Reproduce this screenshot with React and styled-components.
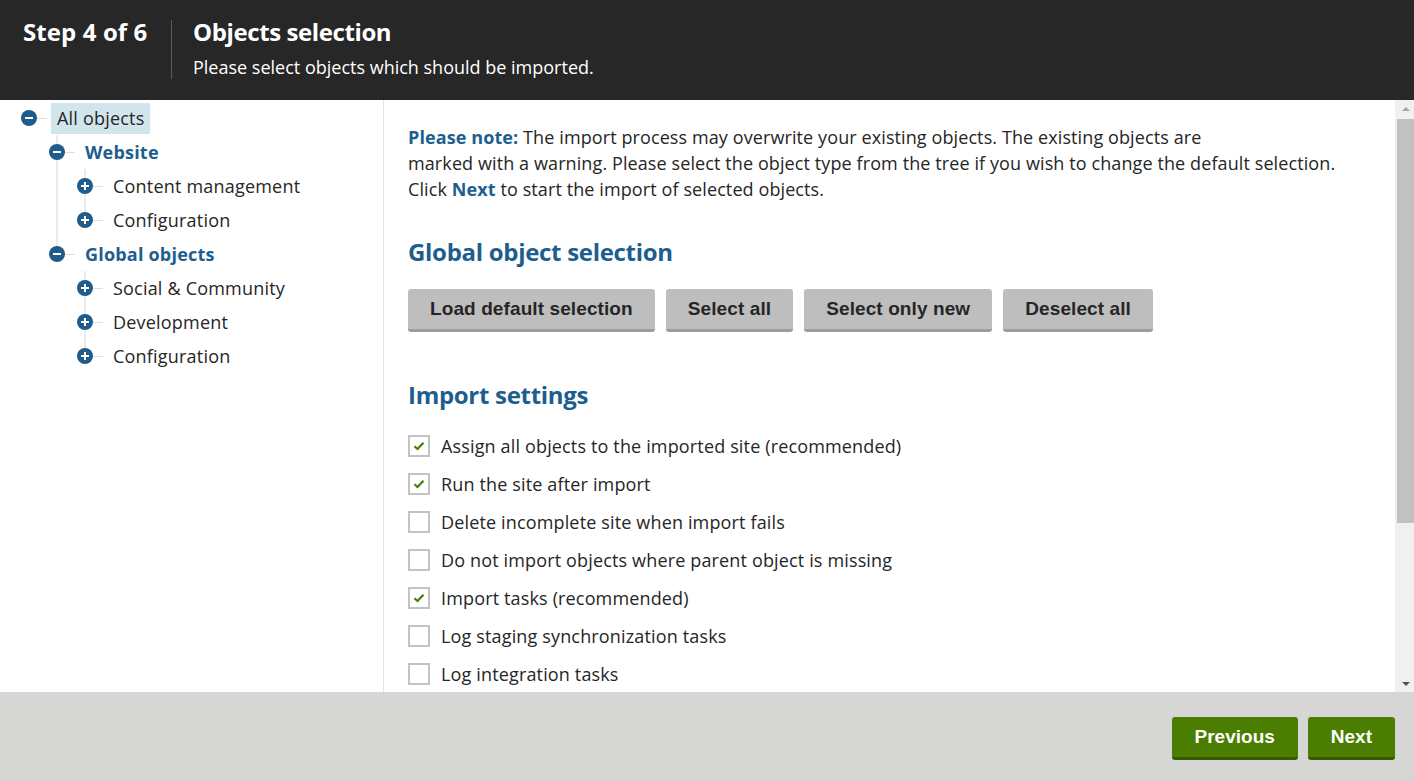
import React from "react";
import styled, { createGlobalStyle } from "styled-components";

const GlobalStyle = createGlobalStyle`
  html, body { margin: 0; padding: 0; height: 100%; }
  body { font-family: "Open Sans", "Noto Sans", sans-serif; color: #262626; background: #fff; }
  #root { height: 100%; }
  * { box-sizing: border-box; }
`;

const Page = styled.div`
  display: flex;
  flex-direction: column;
  width: 1414px;
  height: 781px;
  overflow: hidden;
`;

const Header = styled.header`
  flex: 0 0 100px;
  background: #272727;
  color: #fff;
  display: flex;
  align-items: flex-start;
  padding: 16px 0 0 23px;
`;

const StepLabel = styled.div`
  font-size: 24px;
  font-weight: 700;
  line-height: 32px;
  width: 148px;
  letter-spacing: 0.1px;
`;

const TitleBlock = styled.div`
  border-left: 1px solid #5a5a5a;
  padding: 0 0 0 21px;
  margin-top: 4px;
`;

const Title = styled.h1`
  margin: -4px 0 0;
  font-size: 24px;
  font-weight: 700;
  line-height: 32px;
  letter-spacing: -0.4px;
`;

const Subtitle = styled.div`
  font-size: 18px;
  line-height: 24px;
  margin-top: 7px;
`;

const Body = styled.div`
  flex: 1 1 auto;
  display: flex;
  min-height: 0;
`;

const TreePane = styled.nav`
  flex: 0 0 384px;
  border-right: 1px solid #e4e4e4;
  padding: 1px 0 0 21px;
  font-size: 18px;
`;

const Node = styled.div`
  position: relative;
`;

const Row = styled.div`
  position: relative;
  z-index: 1;
  display: flex;
  align-items: center;
  height: 34px;
`;

const Toggle = styled.span`
  position: relative;
  flex: 0 0 auto;
  width: 16px;
  height: 16px;
  border-radius: 50%;
  background: #1f5b8b;
  display: inline-flex;
  align-items: center;
  justify-content: center;
  &::before {
    content: "";
    width: 8px;
    height: 2px;
    background: #fff;
    position: absolute;
  }
  &::after {
    content: "";
    display: ${(p) => (p.$open ? "none" : "block")};
    width: 2px;
    height: 8px;
    background: #fff;
    position: absolute;
  }
`;

const Connector = styled.span`
  flex: 0 0 auto;
  width: 10px;
  height: 1px;
  background: #dedede;
  margin-right: 4px;
`;

const Label = styled.span`
  display: inline-flex;
  align-items: center;
  height: 31px;
  padding: 0 6px;
  white-space: nowrap;
  letter-spacing: 0.2px;
  background: ${(p) => (p.$selected ? "#d0e5ec" : "transparent")};
  color: ${(p) => (p.$bold ? "#1d5e8e" : "#262626")};
  font-weight: ${(p) => (p.$bold ? 700 : 400)};
`;

const Children = styled.div`
  padding-left: 28px;
  & > ${Node}::before {
    content: "";
    position: absolute;
    left: 7px;
    top: 0;
    height: 100%;
    width: 2px;
    background: #ebebeb;
  }
  & > ${Node}:last-child::before {
    height: 10px;
  }
`;

const Content = styled.main`
  flex: 1 1 auto;
  overflow: hidden;
  padding: 24px 24px 0;
`;

const Scrollbar = styled.div`
  flex: 0 0 19px;
  background: #f0f0f0;
  display: flex;
  flex-direction: column;
  align-items: flex-end;
`;

const Arrow = styled.div`
  flex: 0 0 17px;
  width: 17px;
  display: flex;
  align-items: center;
  justify-content: center;
  &::before {
    content: "";
    border-left: 4px solid transparent;
    border-right: 4px solid transparent;
    ${(p) =>
      p.$down
        ? "border-top: 4px solid #505050;"
        : "border-bottom: 4px solid #a3a3a3;"}
  }
`;

const Thumb = styled.div`
  width: 17px;
  height: 404px;
  margin-top: 2px;
  background: #c1c1c1;
`;

const Track = styled.div`
  flex: 1 1 auto;
`;

const Note = styled.p`
  margin: 0;
  font-size: 18px;
  line-height: 26px;
  letter-spacing: 0.1px;
  color: #262626;
`;

const Strong = styled.strong`
  color: #1d5e8e;
  font-weight: 700;
`;

const Heading = styled.h2`
  margin: ${(p) => p.$top}px 0 0;
  font-size: 24px;
  line-height: 30px;
  font-weight: 700;
  color: #1d5e8e;
  letter-spacing: -0.3px;
`;

const ButtonRow = styled.div`
  display: flex;
  gap: 11px;
  margin-top: 22px;
`;

const GrayButton = styled.button`
  font-family: "Liberation Sans", Arial, sans-serif;
  font-weight: 700;
  font-size: 19px;
  letter-spacing: 0.1px;
  color: #262626;
  background: #bebebe;
  border: none;
  border-bottom: 3px solid #9d9d9d;
  border-radius: 3px;
  height: 43px;
  padding: 0 22px;
  cursor: pointer;
`;

const CheckList = styled.div`
  display: flex;
  flex-direction: column;
  margin-top: 17px;
`;

const CheckRow = styled.label`
  display: flex;
  align-items: center;
  height: 38px;
  font-size: 18px;
  letter-spacing: 0.15px;
  color: #262626;
`;

const Box = styled.span`
  flex: 0 0 auto;
  width: 22px;
  height: 22px;
  border: 2px solid #c2c2c2;
  background: #fff;
  margin-right: 11px;
  display: inline-flex;
  align-items: center;
  justify-content: center;
`;

const Footer = styled.footer`
  flex: 0 0 89px;
  background: #d6d7d5;
  display: flex;
  justify-content: flex-end;
  align-items: flex-start;
  gap: 10px;
  padding: 25px 19px 0 0;
`;

const GreenButton = styled.button`
  font-family: "Liberation Sans", Arial, sans-serif;
  font-weight: 700;
  font-size: 19px;
  color: #fff;
  background: #4a7d00;
  border: none;
  border-bottom: 3px solid #355a00;
  border-radius: 3px;
  height: 43px;
  padding: 0 23px;
  cursor: pointer;
`;

function TreeItem({ label, open, bold, selected, children }) {
  return (
    <Node>
      <Row>
        <Toggle $open={open} />
        <Connector />
        <Label $bold={bold} $selected={selected}>{label}</Label>
      </Row>
      {children && <Children>{children}</Children>}
    </Node>
  );
}

function Check({ checked, children }) {
  return (
    <CheckRow>
      <Box>
        {checked && (
          <svg width="12" height="10" viewBox="0 0 12 10">
            <path d="M1.5 5.2 L4.5 8 L10.5 1.8" fill="none" stroke="#4a7d00" strokeWidth="2.2" />
          </svg>
        )}
      </Box>
      {children}
    </CheckRow>
  );
}

const settings = [
  ["Assign all objects to the imported site (recommended)", true],
  ["Run the site after import", true],
  ["Delete incomplete site when import fails", false],
  ["Do not import objects where parent object is missing", false],
  ["Import tasks (recommended)", true],
  ["Log staging synchronization tasks", false],
  ["Log integration tasks", false],
];

export default function App() {
  return (
    <Page>
      <GlobalStyle />
      <Header>
        <StepLabel>Step 4 of 6</StepLabel>
        <TitleBlock>
          <Title>Objects selection</Title>
          <Subtitle>Please select objects which should be imported.</Subtitle>
        </TitleBlock>
      </Header>
      <Body>
        <TreePane>
          <TreeItem label="All objects" open selected>
            <TreeItem label="Website" open bold>
              <TreeItem label="Content management" />
              <TreeItem label="Configuration" />
            </TreeItem>
            <TreeItem label="Global objects" open bold>
              <TreeItem label="Social & Community" />
              <TreeItem label="Development" />
              <TreeItem label="Configuration" />
            </TreeItem>
          </TreeItem>
        </TreePane>
        <Content>
          <Note>
            <Strong>Please note:</Strong> The import process may overwrite your existing objects. The existing objects are
            <br />
            marked with a warning. Please select the object type from the tree if you wish to change the default selection.
            <br />
            Click <Strong>Next</Strong> to start the import of selected objects.
          </Note>
          <Heading $top={35}>Global object selection</Heading>
          <ButtonRow>
            <GrayButton>Load default selection</GrayButton>
            <GrayButton>Select all</GrayButton>
            <GrayButton>Select only new</GrayButton>
            <GrayButton>Deselect all</GrayButton>
          </ButtonRow>
          <Heading $top={48}>Import settings</Heading>
          <CheckList>
            {settings.map(([text, checked]) => (
              <Check key={text} checked={checked}>{text}</Check>
            ))}
          </CheckList>
        </Content>
        <Scrollbar>
          <Arrow />
          <Thumb />
          <Track />
          <Arrow $down />
        </Scrollbar>
      </Body>
      <Footer>
        <GreenButton>Previous</GreenButton>
        <GreenButton>Next</GreenButton>
      </Footer>
    </Page>
  );
}
